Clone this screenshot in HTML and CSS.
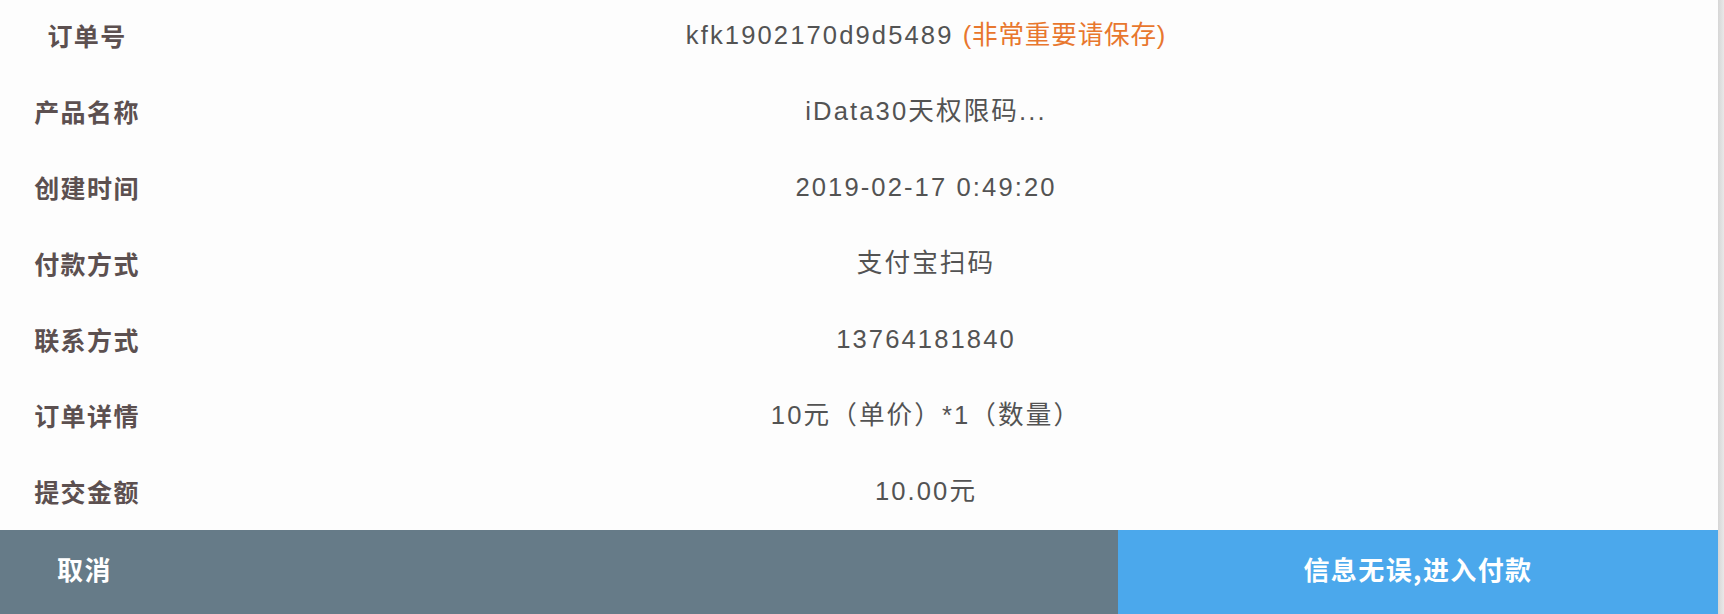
FILE: index.html
```html
<!DOCTYPE html>
<html lang="zh-CN">
<head>
<meta charset="utf-8">
<title>订单确认</title>
<link rel="stylesheet" href="styles.css">
</head>
<body>
<div class="window">
  <div class="page">
    <div class="sheet">
      <div class="row"><div class="label">订单号</div><div class="value"><span class="code">kfk1902170d9d5489</span> <span class="warn">(非常重要请保存)</span></div></div>
      <div class="row"><div class="label">产品名称</div><div class="value">iData30天权限码...</div></div>
      <div class="row"><div class="label">创建时间</div><div class="value">2019-02-17 0:49:20</div></div>
      <div class="row"><div class="label">付款方式</div><div class="value">支付宝扫码</div></div>
      <div class="row"><div class="label">联系方式</div><div class="value">13764181840</div></div>
      <div class="row"><div class="label">订单详情</div><div class="value">10元（单价）*1（数量）</div></div>
      <div class="row"><div class="label">提交金额</div><div class="value">10.00元</div></div>
    </div>
    <div class="actions">
      <button class="btn cancel" type="button">取消</button>
      <button class="btn confirm" type="button">信息无误,进入付款</button>
    </div>
  </div>
  <div class="scrollbar"></div>
</div>
</body>
</html>
```
FILE: styles.css
```css
html, body {
  margin: 0;
  padding: 0;
  height: 100%;
  overflow: hidden;
}

body {
  background: #fdfdfd;
  font-family: "Liberation Sans", "Noto Sans CJK SC", sans-serif;
}

.window {
  display: flex;
  height: 614px;
  width: 1724px;
}

.page {
  flex: 1;
  display: flex;
  flex-direction: column;
  min-width: 0;
}

.sheet {
  height: 530px;
  display: flex;
  flex-direction: column;
  justify-content: flex-end;
  overflow: hidden;
}

.row {
  flex: 0 0 76px;
  box-sizing: border-box;
  padding-bottom: 2px;
  display: grid;
  grid-template-columns: 174px 1504px;
  align-items: center;
}

.label {
  text-align: center;
  font-family: "Noto Sans CJK SC", sans-serif;
  font-weight: 700;
  font-size: 25px;
  letter-spacing: 1.4px;
  color: #5c5050;
  line-height: 1.2;
}

.value {
  text-align: center;
  font-size: 25.6px;
  letter-spacing: 2.1px;
  color: #535353;
  line-height: 1.2;
}

.warn {
  color: #e8772e;
  letter-spacing: 0.8px;
}

.actions {
  flex: 0 0 84px;
  display: grid;
  grid-template-columns: 1118px 1fr;
}

.btn {
  border: 0;
  margin: 0;
  font-family: "Noto Sans CJK SC", sans-serif;
  font-weight: 700;
  font-size: 26px;
  letter-spacing: 1.4px;
  color: #ffffff;
  cursor: pointer;
  line-height: 1.2;
  padding-top: 0;
  padding-bottom: 6px;
}

.cancel {
  background: #667b88;
  text-align: left;
  padding-left: 57px;
}

.confirm {
  background: #4ba8ec;
  text-align: center;
}

.scrollbar {
  flex: 0 0 6px;
  background: linear-gradient(to right, #d6d6d6, #e8e8e8);
}
```
